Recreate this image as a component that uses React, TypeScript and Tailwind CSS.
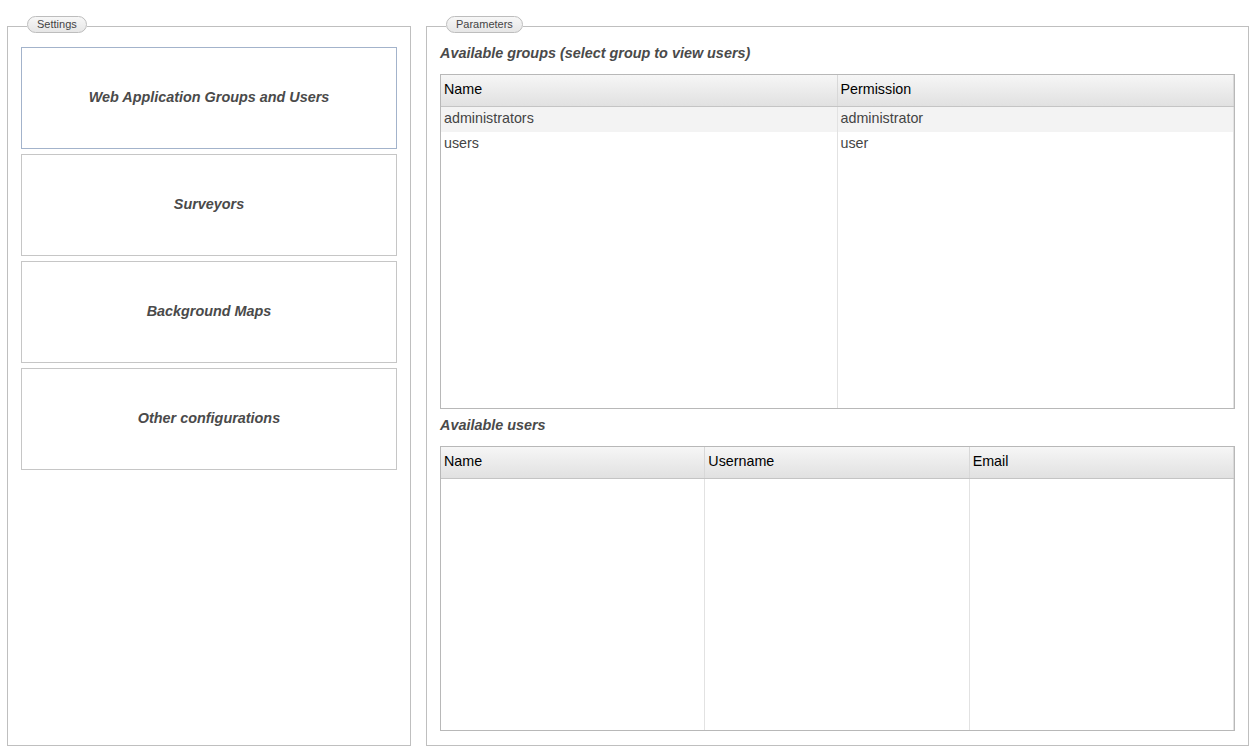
import React from "react";

const font = { fontFamily: '"Liberation Sans", Arial, sans-serif' };

const menu = [
  { label: "Web Application Groups and Users", active: true },
  { label: "Surveyors" },
  { label: "Background Maps" },
  { label: "Other configurations" },
];

const groups = [
  { name: "administrators", permission: "administrator" },
  { name: "users", permission: "user" },
];

function Legend({ children }: { children: React.ReactNode }) {
  return (
    <legend className="ml-[6px] h-[20px]">
      <span className="block h-[17px] px-[9px] leading-[15px] text-[11px] text-[#444] border border-[#bdbdbd] rounded-full bg-gradient-to-b from-[#f7f7f7] to-[#e6e6e6]">
        {children}
      </span>
    </legend>
  );
}

function TableHead({ cols }: { cols: string[] }) {
  return (
    <div className="grid grid-flow-col auto-cols-fr h-[32px] bg-gradient-to-b from-[#f6f6f6] to-[#e1e1e1] border-b border-[#c4c4c4]">
      {cols.map((c) => (
        <div
          key={c}
          className="flex items-center px-[3px] pb-[2px] text-[14.3px] text-black border-r border-[#d8d8d8]"
        >
          {c}
        </div>
      ))}
    </div>
  );
}

function DataTable({ cols, rows, height }: { cols: string[]; rows: string[][]; height: string }) {
  return (
    <div className={"flex flex-col border border-[#b8b8b8] bg-white " + height}>
      <TableHead cols={cols} />
      <div className="flex-1 grid grid-flow-col auto-cols-fr">
        {cols.map((c, ci) => (
          <div key={c} className="flex flex-col border-r border-[#e2e2e2]">
            {rows.map((r, ri) => (
              <div
                key={ri}
                className={
                  "h-[25px] flex items-center px-[3px] pb-[2px] text-[14.3px] text-[#444] " +
                  (ri === 0 ? "bg-[#f3f3f3]" : "")
                }
              >
                {r[ci]}
              </div>
            ))}
          </div>
        ))}
      </div>
    </div>
  );
}

export default function App() {
  return (
    <div className="w-[1254px] h-[756px] bg-white flex gap-[15px] pl-[7px] pr-[5px] pt-[16px] pb-[10px]" style={font}>
      {/* Settings */}
      <fieldset className="w-[404px] min-w-0 border border-[#bfbfbf] px-[13px] pt-[11px] pb-[13px]">
        <Legend>Settings</Legend>
        <div className="flex flex-col gap-[5px]">
          {menu.map((m) => (
            <div
              key={m.label}
              className={
                "h-[102px] flex items-center justify-center border text-[14.4px] font-bold italic text-[#4a4a4a] " +
                (m.active ? "border-[#a3b3cb]" : "border-[#c6c6c6]")
              }
            >
              {m.label}
            </div>
          ))}
        </div>
      </fieldset>

      {/* Parameters */}
      <fieldset className="flex-1 min-w-0 border border-[#bfbfbf] px-[13px] pt-[7px] pb-[14px] flex flex-col">
        <Legend>Parameters</Legend>
        <div className="h-[20px] leading-[20px] text-[14.4px] font-bold italic text-[#4a4a4a]">
          Available groups (select group to view users)
        </div>
        <div className="mt-[11px]">
          <DataTable
            cols={["Name", "Permission"]}
            rows={groups.map((g) => [g.name, g.permission])}
            height="h-[335px]"
          />
        </div>
        <div className="h-[20px] mt-[6px] leading-[20px] text-[14.4px] font-bold italic text-[#4a4a4a]">
          Available users
        </div>
        <div className="mt-[11px] flex-1 flex flex-col">
          <DataTable cols={["Name", "Username", "Email"]} rows={[]} height="flex-1" />
        </div>
      </fieldset>
    </div>
  );
}
